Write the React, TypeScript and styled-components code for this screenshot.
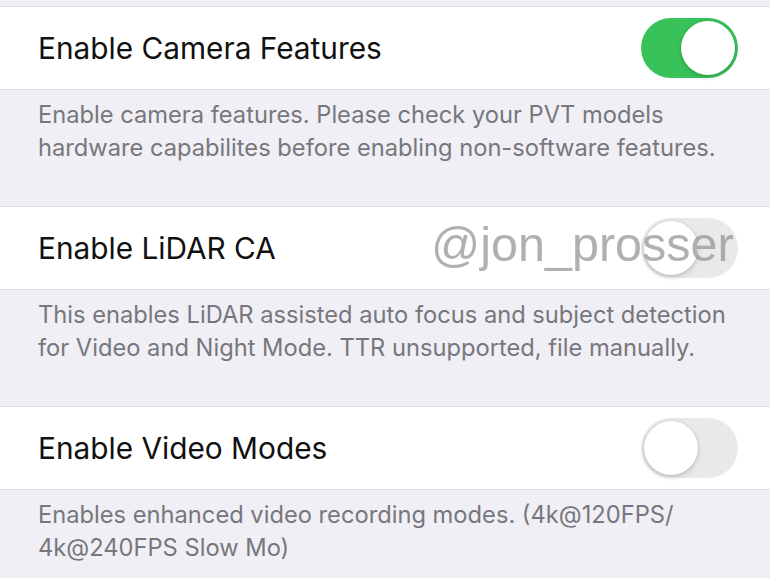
import React from "react";
import styled, { createGlobalStyle } from "styled-components";

const Global = createGlobalStyle`
  html, body {
    margin: 0;
    padding: 0;
    background: #f0eff5;
  }
  body {
    font-family: Inter, "Noto Sans", "Liberation Sans", sans-serif;
    -webkit-font-smoothing: antialiased;
  }
`;

const Page = styled.div`
  width: 770px;
  height: 578px;
  overflow: hidden;
  background: #f0eff5;
  padding-top: 6px;
  box-sizing: border-box;
`;

const Row = styled.div`
  height: 84px;
  background: #fff;
  border-top: 1px solid #dcdce1;
  border-bottom: 1px solid #dcdce1;
  display: flex;
  align-items: center;
  justify-content: space-between;
  padding: 0 32px 0 38px;
  box-sizing: border-box;
  position: relative;
`;

const Title = styled.span`
  font-size: 29.8px;
  color: #111;
`;

const Footer = styled.div`
  height: 116px;
  padding: 8px 20px 0 38px;
  box-sizing: border-box;
  font-size: 23.7px;
  line-height: 33px;
  color: #77777c;
  white-space: nowrap;
`;

const Track = styled.div<{ $on?: boolean }>`
  width: 97px;
  height: 60px;
  border-radius: 30px;
  background: ${(p) => (p.$on ? "#38c35a" : "#e9e9eb")};
  position: relative;
  flex-shrink: 0;
`;

const Knob = styled.div<{ $on?: boolean }>`
  position: absolute;
  top: 3px;
  ${(p) => (p.$on ? "right: 3px;" : "left: 3px;")}
  width: 54px;
  height: 54px;
  border-radius: 50%;
  background: #fff;
  box-shadow: 0 2px 5px rgba(0, 0, 0, 0.18), 0 0 0 1px rgba(0, 0, 0, 0.04);
`;

const Watermark = styled.span`
  position: absolute;
  left: 431px;
  top: 9px;
  font-family: "Liberation Sans", Arial, sans-serif;
  font-size: 48.5px;
  color: rgba(150, 150, 150, 0.75);
  pointer-events: none;
`;

function Toggle({ on }: { on?: boolean }) {
  return (
    <Track $on={on}>
      <Knob $on={on} />
    </Track>
  );
}

export default function App() {
  return (
    <Page>
      <Global />
      <Row>
        <Title>Enable Camera Features</Title>
        <Toggle on />
      </Row>
      <Footer>
        Enable camera features. Please check your PVT models
        <br />
        hardware capabilites before enabling non-software features.
      </Footer>
      <Row>
        <Title>Enable LiDAR CA</Title>
        <Toggle />
        <Watermark>@jon_prosser</Watermark>
      </Row>
      <Footer>
        This enables LiDAR assisted auto focus and subject detection
        <br />
        for Video and Night Mode. TTR unsupported, file manually.
      </Footer>
      <Row>
        <Title>Enable Video Modes</Title>
        <Toggle />
      </Row>
      <Footer>
        Enables enhanced video recording modes. (4k@120FPS/
        <br />
        4k@240FPS Slow Mo)
      </Footer>
    </Page>
  );
}
